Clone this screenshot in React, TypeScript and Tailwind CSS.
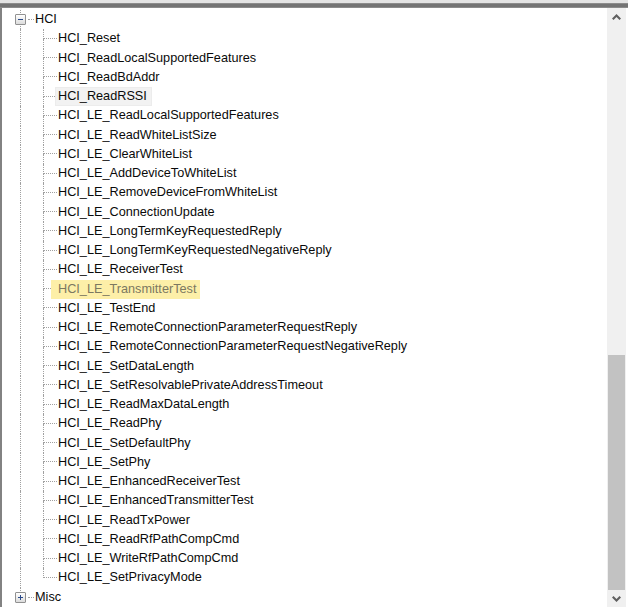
import React from "react";

const hciItems = [
    "HCI_Reset",
    "HCI_ReadLocalSupportedFeatures",
    "HCI_ReadBdAddr",
    "HCI_ReadRSSI",
    "HCI_LE_ReadLocalSupportedFeatures",
    "HCI_LE_ReadWhiteListSize",
    "HCI_LE_ClearWhiteList",
    "HCI_LE_AddDeviceToWhiteList",
    "HCI_LE_RemoveDeviceFromWhiteList",
    "HCI_LE_ConnectionUpdate",
    "HCI_LE_LongTermKeyRequestedReply",
    "HCI_LE_LongTermKeyRequestedNegativeReply",
    "HCI_LE_ReceiverTest",
    "HCI_LE_TransmitterTest",
    "HCI_LE_TestEnd",
    "HCI_LE_RemoteConnectionParameterRequestReply",
    "HCI_LE_RemoteConnectionParameterRequestNegativeReply",
    "HCI_LE_SetDataLength",
    "HCI_LE_SetResolvablePrivateAddressTimeout",
    "HCI_LE_ReadMaxDataLength",
    "HCI_LE_ReadPhy",
    "HCI_LE_SetDefaultPhy",
    "HCI_LE_SetPhy",
    "HCI_LE_EnhancedReceiverTest",
    "HCI_LE_EnhancedTransmitterTest",
    "HCI_LE_ReadTxPower",
    "HCI_LE_ReadRfPathCompCmd",
    "HCI_LE_WriteRfPathCompCmd",
    "HCI_LE_SetPrivacyMode",
];

const ExpandBox = ({open}: {open: boolean}) => (
    <div className="w-[11px] h-[11px] border border-[#919191] bg-gradient-to-b from-white to-[#dcdcdc] flex items-center justify-center rounded-[1px]">
        <svg width="7" height="7" viewBox="0 0 7 7">
            <rect x="1" y="3" width="5" height="1" fill="#2a4a8a" />
            {!open && <rect x="3" y="1" width="1" height="5" fill="#2a4a8a" />}
        </svg>
    </div>
);

const ParentRow = ({label, open, last}: {label: string; open: boolean; last?: boolean}) => (
    <div className="h-[19.25px] flex items-stretch">
        <div className="w-[13px]" />
        <div className="w-[13px] relative flex items-center">
            <div className={"absolute left-[5px] w-0 border-l border-dotted border-[#a0a0a0] " + (last ? "top-0 h-1/2" : "top-0 h-full")} />
            <div className="relative z-10">
                <ExpandBox open={open} />
            </div>
        </div>
        <div className="w-[6px] flex items-center">
            <div className="w-full border-t border-dotted border-[#a0a0a0]" />
        </div>
        <div className="ml-[1px] flex items-center text-[12.7px] text-[#0a0a0a]">{label}</div>
    </div>
);

const ChildRow = ({label, last}: {label: string; last: boolean}) => {
    let textBox = "px-[1px] text-[#0a0a0a]";
    if (label === "HCI_ReadRSSI") textBox = "pl-[2px] pr-[4px] -ml-[2px] text-[#0a0a0a] bg-[#f2f2f2] border border-[#ececec]";
    if (label === "HCI_LE_TransmitterTest") textBox = "pl-[7px] pr-[4px] -ml-[6px] text-[#7c7860] bg-[#fdefa8]";
    return (
        <div className="h-[19.25px] flex items-stretch">
            <div className="w-[18px]" />
            <div className="w-[23px] border-l border-dotted border-[#a0a0a0]" />
            <div className="w-[14px] flex flex-col">
                <div className="h-1/2 border-l border-b border-dotted border-[#a0a0a0]" />
                <div className={"h-1/2 " + (last ? "" : "border-l border-dotted border-[#a0a0a0]")} />
            </div>
            <div className="flex items-stretch text-[12.7px]">
                <div className={"flex items-center " + textBox}>{label}</div>
            </div>
        </div>
    );
};

export default function App() {
    return (
        <div className="w-[628px] h-[607px] overflow-hidden bg-white flex flex-col" style={{fontFamily: '"Liberation Sans", Arial, sans-serif'}}>
            <div className="h-[3px] bg-[#e4e4e4]" />
            <div className="h-[5px] bg-[#747474] border-y border-[#8c8c8c]" />
            <div className="flex-1 flex min-h-0">
                <div className="w-[2px] bg-[#828282]" />
                <div className="flex-1 pt-[2px] overflow-hidden">
                    <ParentRow label="HCI" open={true} />
                    {hciItems.map((item, i) => (
                        <ChildRow key={item} label={item} last={i === hciItems.length - 1} />
                    ))}
                    <ParentRow label="Misc" open={false} last />
                </div>
                <div className="w-[19px] bg-[#f0f0f0] flex flex-col">
                    <div className="h-[17px] flex items-center justify-center">
                        <svg width="9" height="6" viewBox="0 0 9 6">
                            <path d="M0 4.5 L4.5 0 L9 4.5 L7.5 6 L4.5 3 L1.5 6 Z" fill="#606060" />
                        </svg>
                    </div>
                    <div className="flex-1 flex flex-col px-px">
                        <div className="h-[330px]" />
                        <div className="flex-1 bg-[#c2c2c2]" />
                    </div>
                    <div className="h-[17px] flex items-center justify-center">
                        <svg width="9" height="6" viewBox="0 0 9 6">
                            <path d="M0 1.5 L1.5 0 L4.5 3 L7.5 0 L9 1.5 L4.5 6 Z" fill="#606060" />
                        </svg>
                    </div>
                </div>
                <div className="w-[2px] bg-white" />
            </div>
        </div>
    );
}
